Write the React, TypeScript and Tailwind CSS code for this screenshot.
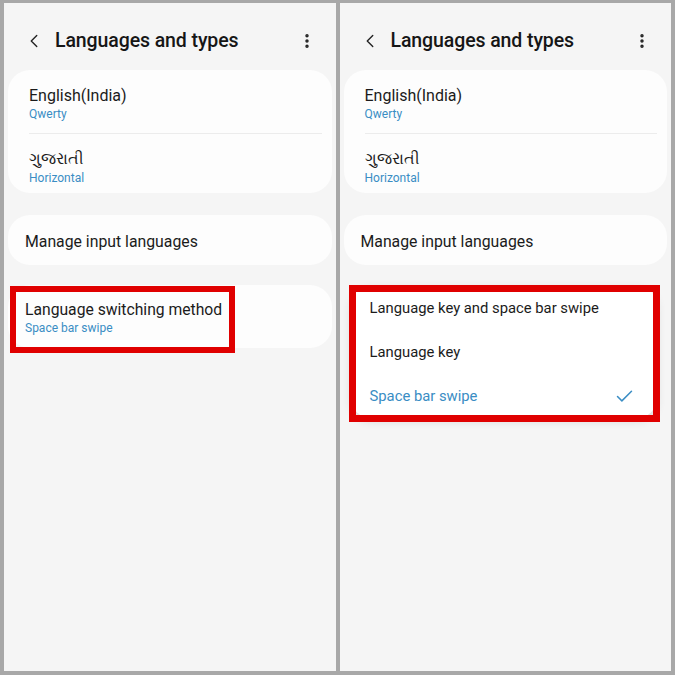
import { ChevronLeft, EllipsisVertical, Check } from "lucide-react";

const font = { fontFamily: "Roboto, 'Noto Sans', sans-serif" };

function Header() {
  return (
    <div className="h-[65px] flex items-center pt-[10px] pl-[19px] pr-[20px] shrink-0">
      <ChevronLeft className="w-[22px] h-[22px] text-[#222]" strokeWidth={1.5} />
      <h1 className="ml-[10px] text-[19.5px] font-medium text-[#161616] tracking-[-0.1px]">
        Languages and types
      </h1>
      <EllipsisVertical className="ml-auto w-[18px] h-[18px] text-[#222]" strokeWidth={2.6} />
    </div>
  );
}

function LanguageCard() {
  return (
    <div className="mx-[4px] mt-[2px] h-[123px] rounded-[22px] bg-[#fdfdfd] flex flex-col px-[21px]">
      <div className="h-[64px] flex flex-col justify-center pt-[5px] border-b border-[#ececec] mr-[-11px]">
        <p className="text-[16px] leading-[20px] text-[#1b1b1b]">English(India)</p>
        <p className="text-[12px] leading-[16px] text-[#3a8dc4]">Qwerty</p>
      </div>
      <div className="flex-1 flex flex-col justify-center pt-[6px]">
        <p className="text-[16px] leading-[22px] text-[#1b1b1b]">ગુજરાતી</p>
        <p className="text-[12px] leading-[16px] text-[#3a8dc4]">Horizontal</p>
      </div>
    </div>
  );
}

function ManageCard() {
  return (
    <div className="mx-[4px] mt-[22px] h-[50px] rounded-[22px] bg-[#fdfdfd] flex items-center pt-[4px] px-[17px]">
      <p className="text-[15.8px] text-[#1b1b1b]">Manage input languages</p>
    </div>
  );
}

function LeftPanel() {
  return (
    <div className="relative flex-1 bg-[#f5f5f5] flex flex-col">
      <Header />
      <LanguageCard />
      <ManageCard />
      <div className="mx-[4px] mt-[20px] h-[63px] rounded-[22px] bg-[#fdfdfd] flex flex-col justify-center pt-[3px] px-[17px]">
        <p className="text-[15.7px] leading-[20px] text-[#1b1b1b]">Language switching method</p>
        <p className="text-[12px] leading-[16px] text-[#3a8dc4]">Space bar swipe</p>
      </div>
      <div className="absolute left-[6px] top-[283px] w-[225px] h-[67px] border-[6px] border-[#e00000]" />
    </div>
  );
}

const options = [
  { label: "Language key and space bar swipe", selected: false },
  { label: "Language key", selected: false },
  { label: "Space bar swipe", selected: true },
];

function RightPanel() {
  return (
    <div className="relative flex-1 bg-[#f5f5f5] flex flex-col">
      <Header />
      <LanguageCard />
      <ManageCard />
      <div className="ml-[11px] mr-[14px] mt-[21px] rounded-[20px] bg-white shadow-[0_3px_10px_rgba(0,0,0,0.12)] flex flex-col">
        {options.map((o) => (
          <div key={o.label} className="h-[44px] flex items-center pl-[19px] pr-[22px]">
            <span className={o.selected ? "text-[14.8px] text-[#3a8dc4]" : "text-[14.8px] text-[#1b1b1b]"}>
              {o.label}
            </span>
            {o.selected && <Check className="ml-auto w-[21px] h-[21px] text-[#3a8dc4]" strokeWidth={1.7} />}
          </div>
        ))}
      </div>
      <div className="absolute left-[9px] top-[282px] w-[311px] h-[137px] border-[7px] border-[#e00000]" />
    </div>
  );
}

export default function App() {
  return (
    <div style={font} className="w-[675px] h-[675px] bg-[#a8a8a8] flex gap-[4px] pt-[3px] pl-[4px] pr-[4px] pb-[4px]">
      <LeftPanel />
      <RightPanel />
    </div>
  );
}
